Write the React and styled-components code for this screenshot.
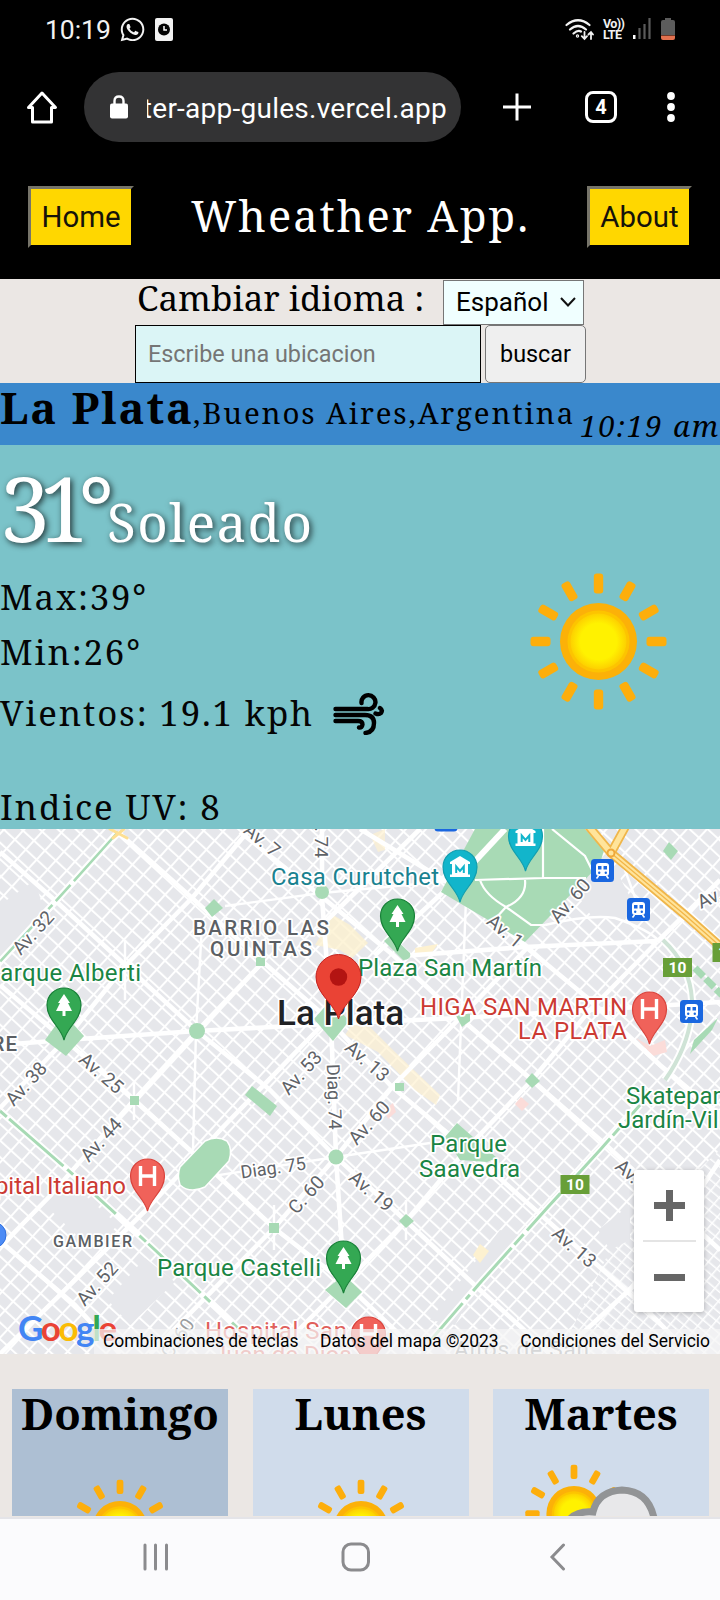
import React from "react";
import styled, { createGlobalStyle } from "styled-components";
import { FaWhatsapp } from "react-icons/fa";

const serif = `"Noto Serif", "DejaVu Serif Condensed", "DejaVu Serif", serif`;

const Global = createGlobalStyle`
  * { box-sizing: border-box; }
  body { margin: 0; background: #ebe7e4; }
  button, input, select { margin: 0; border-radius: 0; font-family: Roboto, sans-serif; }
`;

const Screen = styled.div`
  width: 720px;
  height: 1600px;
  overflow: hidden;
  display: flex;
  flex-direction: column;
  background: #ebe7e4;
  font-family: Roboto, sans-serif;
  color: #000;
`;

/* phone status bar */
const StatusBar = styled.div`
  height: 58px;
  flex: none;
  background: #000;
  color: #f2f2f2;
  display: flex;
  align-items: center;
  padding: 0 45px 0 45px;
`;
const Clock = styled.span`
  font-size: 26.6px;
  width: 74px;
  letter-spacing: -0.1px;
`;
const StatusRight = styled.div`
  margin-left: auto;
  display: flex;
  align-items: center;
`;
const VoLte = styled.div`
  width: 22px;
  margin: 0 8px 0 9px;
  font-size: 12.5px;
  line-height: 11.5px;
  font-weight: 700;
  letter-spacing: -0.6px;
  white-space: nowrap;
`;

/* browser toolbar */
const BrowserBar = styled.div`
  height: 100px;
  flex: none;
  background: #000;
  display: flex;
  align-items: flex-start;
  padding: 14px 0 0 26px;
`;
const BarIcon = styled.svg`
  flex: none;
  margin-left: ${(p) => p.$gap || 0}px;
  margin-top: ${(p) => p.$top || 0}px;
`;
const AddressPill = styled.div`
  width: 377px;
  height: 70px;
  margin-left: 24px;
  border-radius: 35px;
  background: #333334;
  display: flex;
  align-items: center;
  padding-left: 26px;
`;
const Url = styled.div`
  width: 300px;
  margin-left: 19px;
  overflow: hidden;
  display: flex;
  justify-content: flex-end;
  color: #fff;
  font-size: 28px;
  line-height: 40px;
  letter-spacing: 0.25px;
  white-space: nowrap;
  padding-top: 3px;
`;
const TabCount = styled.div`
  width: 32px;
  height: 32px;
  margin: 19px 0 0 54px;
  border: 3px solid #fff;
  border-radius: 8px;
  color: #fff;
  font-size: 20px;
  font-weight: 700;
  line-height: 26px;
  text-align: center;
`;

/* app header */
const Header = styled.header`
  height: 121px;
  flex: none;
  background: #000;
  display: flex;
  justify-content: space-between;
  padding: 28px 28px 0;
`;
const NavButton = styled.button`
  width: ${(p) => p.$w}px;
  height: 62px;
  padding: 0;
  border: 3px outset #6b6b6b;
  border-color: #767469 #3c330c #3c330c #767469;
  background: #ffd700;
  color: #15130a;
  font-size: 29.4px;
`;
const Title = styled.h1`
  margin: 0;
  font-family: ${serif};
  font-weight: 400;
  font-size: 43.4px;
  line-height: 60px;
  letter-spacing: 2px;
  color: #fff;
  white-space: nowrap;
`;

/* language and search */
const Controls = styled.section`
  height: 104px;
  flex: none;
  display: flex;
  flex-direction: column;
  padding-left: 135px;
`;
const LanguageRow = styled.div`
  display: flex;
  height: 46px;
  padding-top: 1px;
`;
const LanguageLabel = styled.label`
  width: 308px;
  padding-left: 2px;
  font-family: ${serif};
  font-size: 34.9px;
  line-height: 36px;
  white-space: nowrap;
`;
const LanguageSelect = styled.div`
  width: 141px;
  height: 45px;
  border: 1px solid #767676;
  background: #f0ffff;
  display: flex;
  align-items: center;
  gap: 12px;
  padding: 0 0 2px 12px;
  font-size: 26px;
`;
const SearchRow = styled.div`
  display: flex;
  gap: 4px;
  height: 58px;
`;
const SearchInput = styled.input`
  width: 346px;
  height: 58px;
  border: 1.4px solid #000;
  background: #dbf5f6;
  padding: 0 0 0 12px;
  font-size: 23.4px;
  &::placeholder { color: #757575; opacity: 1; }
`;
const SearchButton = styled.button`
  width: 101px;
  height: 58px;
  padding: 0;
  border: 1px solid #767676;
  border-radius: 5px;
  background: #efefef;
  color: #000;
  font-size: 23.4px;
`;

/* city strip */
const CityBar = styled.section`
  height: 62px;
  flex: none;
  background: #3a88cc;
  display: flex;
  font-family: ${serif};
  white-space: nowrap;
`;
const City = styled.strong`
  font-size: 43.5px;
  line-height: 48px;
  width: 193px;
  letter-spacing: 1.9px;
`;
const Region = styled.span`
  font-size: 29.5px;
  line-height: 59px;
  width: 388px;
  letter-spacing: 1.85px;
`;
const LocalTime = styled.em`
  font-size: 29.5px;
  line-height: 85px;
  letter-spacing: 1.8px;
`;

/* current weather */
const Current = styled.section`
  height: 384px;
  flex: none;
  background: #7bc3c9;
  display: flex;
  font-family: ${serif};
  color: #050505;
`;
const Readings = styled.div`
  width: 527px;
`;
const TempLine = styled.div`
  height: 124px;
  display: flex;
  align-items: baseline;
  color: #fff;
  text-shadow: 2px 2px 6px rgba(0, 0, 0, 0.75);
  line-height: 126px;
  white-space: nowrap;
`;
const Temperature = styled.span`
  width: 107px;
  font-size: 89px;
  letter-spacing: -10.5px;
`;
const Condition = styled.span`
  font-size: 53px;
  letter-spacing: 1.3px;
`;
const Reading = styled.div`
  height: ${(p) => p.$h}px;
  display: flex;
  align-items: center;
  gap: 18px;
  font-size: 34.8px;
  line-height: 50px;
  letter-spacing: 1.85px;
  white-space: nowrap;
`;
const BigSun = styled.svg`
  margin-top: 125px;
  width: 143px;
  height: 143px;
`;

/* map */
const MapArea = styled.section`
  position: relative;
  height: 525px;
  flex: none;
  overflow: hidden;
  background: #e8eaed;
`;
const MapDrawing = styled.svg`
  display: block;
  font-family: Roboto, sans-serif;
`;
const ZoomControl = styled.div`
  position: absolute;
  right: 16px;
  top: 341px;
  width: 70px;
  height: 142px;
  border-radius: 3px;
  background: #fff;
  box-shadow: 0 1px 5px rgba(0, 0, 0, 0.25);
  display: flex;
  flex-direction: column;
  align-items: center;
`;
const ZoomHalf = styled.div`
  height: 70px;
  display: flex;
  align-items: center;
`;
const ZoomDivider = styled.div`
  width: 53px;
  height: 2px;
  background: #e4e4e4;
`;
const Attribution = styled.div`
  position: absolute;
  right: 0;
  bottom: 0;
  width: 626px;
  height: 25px;
  background: rgba(245, 245, 245, 0.72);
  display: flex;
  justify-content: space-between;
  padding: 0 10px 0 9px;
  font-size: 17.45px;
  line-height: 25px;
  white-space: nowrap;
`;
const Logo = styled.div`
  position: absolute;
  left: 18px;
  top: 478px;
  font-family: Lato, sans-serif;
  font-size: 35px;
  line-height: 40px;
  font-weight: 700;
  letter-spacing: -2.4px;
`;
const Tint = styled.span`
  color: ${(p) => p.$c};
`;

/* forecast */
const Forecast = styled.section`
  flex: none;
  height: 163px;
  padding: 35px 12px 1px;
  display: grid;
  grid-template-columns: repeat(3, 216px);
  column-gap: 24.5px;
  overflow: hidden;
`;
const DayCard = styled.article`
  height: 127px;
  overflow: hidden;
  background: ${(p) => (p.$today ? "#adbfd3" : "#d0dceb")};
  display: flex;
  flex-direction: column;
  align-items: center;
`;
const DayName = styled.h2`
  flex: none;
  margin: 0;
  font-family: ${serif};
  font-size: 43.4px;
  font-weight: 700;
  line-height: 49px;
  height: 53px;
`;
const DayIcon = styled.svg`
  flex: none;
  width: 200px;
  height: 140px;
`;

/* system navigation */
const SystemNav = styled.nav`
  height: 84px;
  flex: none;
  background: #fbfbfd;
  border-top: 2px solid #e4e4e8;
  display: flex;
  align-items: center;
  padding: 0 0 6px 142px;
`;

const rays = Array.from({ length: 12 }, (_, i) => i * 30);

function Sun({ x, y, r }) {
  const k = r / 68;
  return (
    <g transform={`translate(${x} ${y}) scale(${k})`}>
      {rays.map((a) => (
        <rect key={a} x="-4.700" y="-68" width="9.400" height="20" rx="3" fill="#fdae0c" transform={`rotate(${a})`} />
      ))}
      <circle r="38.5" fill="#fcb108" />
      <circle r="31" fill="#fdc400" />
      <circle r="28" fill="url(#sunCore)" />
    </g>
  );
}

function Halo({ x, y, size, color, anchor = "start", weight = 400, ls, w, rot, children }) {
  return (
    <text
      x={x}
      y={y}
      fontSize={size}
      fill={color}
      textAnchor={anchor}
      fontWeight={weight}
      letterSpacing={ls}
      textLength={w}
      stroke="#fff"
      strokeWidth="3.5"
      strokeLinejoin="round"
      paintOrder="stroke"
      transform={rot ? `rotate(${rot} ${x} ${y})` : undefined}
    >
      {children}
    </text>
  );
}

const pinPath = "M0 35 C-3 22 -17 15 -17 0 A17 17 0 0 1 17 0 C17 15 3 22 0 35Z";

function Pin({ x, y, kind }) {
  const fill = { tree: "#34a853", museum: "#12b5cb", h: "#f0625a" }[kind];
  const edge = { tree: "#188038", museum: "#129eaf", h: "#d9433c" }[kind];
  return (
    <g transform={`translate(${x} ${y})`}>
      <path d={pinPath} fill={fill} stroke={edge} strokeWidth="1.2" />
      {kind === "tree" && <path d="M0-11 L6-2 H4 L8 6 H1.5 V11 H-1.5 V6 H-8 L-4-2 H-6Z" fill="#fff" />}
      {kind === "h" && <path d="M-7-10V10M7-10V10M-7 0H7" stroke="#fff" strokeWidth="3.4" />}
      {kind === "museum" && (
        <g fill="#fff">
          <path d="M0-11 L10-5 V-3 H-10 V-5Z" />
          <path d="M-8-3 H8 V8 H-8Z M-10 7.500H10V10H-10Z" />
          <path d="M-3.800 6V-0.500L0 4L3.800-0.500V6" fill="none" stroke="#12b5cb" strokeWidth="2" />
        </g>
      )}
    </g>
  );
}

function Station({ x, y }) {
  return (
    <g transform={`translate(${x} ${y})`}>
      <rect x="-11.500" y="-11.500" width="23" height="23" rx="3.500" fill="#1a67e0" />
      <rect x="-6.500" y="-7.500" width="13" height="13" rx="3" fill="#fff" />
      <path d="M-4.500-4.500H-1V-1H-4.500Z M1-4.500H4.500V-1H1Z" fill="#1a67e0" />
      <circle cx="-3.300" cy="2.200" r="1.200" fill="#1a67e0" />
      <circle cx="3.300" cy="2.200" r="1.200" fill="#1a67e0" />
      <path d="M-4 5.500L-6 8M4 5.500L6 8" stroke="#fff" strokeWidth="1.600" />
    </g>
  );
}

function RouteBadge({ x, y }) {
  return (
    <g>
      <rect x={x - 14.5} y={y - 9.5} width="29" height="19" fill="#689f38" />
      <text x={x} y={y + 5.5} fontSize="15.500" fontWeight="700" fill="#fff" textAnchor="middle">10</text>
    </g>
  );
}

const avenues = [
  "M0 852L58 903L197 1031L270 1090L336 1157L405 1220L480 1290L522 1328L550 1354",
  "M118 832L192 898L263 962L327 1018L392 1087L468 1150L540 1214L640 1303L690 1354",
  "M240 832L322 897L393 955L460 1018L532 1080L606 1145L720 1250",
  "M360 829L465 893L527 948L590 1000L660 1065L720 1115",
  "M0 985L65 1040L134 1100L192 1152L274 1228L345 1283L420 1354",
  "M0 1241L75 1305L120 1354",
  "M250 829L192 898L125 966L65 1040L0 1108",
  "M420 829L322 925M327 1020L225 1125L147 1209L0 1354",
  "M263 962L197 1031L134 1100L50 1196L0 1247",
  "M527 948L460 1018L392 1087L336 1157L274 1228L150 1354",
  "M657 942L590 1010L532 1080L470 1145L406 1221L345 1283L275 1354",
  "M505 829L440 895L375 955M720 880L657 942",
  "M720 1160L640 1280L560 1354",
  "M0 1045L65 1040L197 1031L327 1024L460 1018L720 1002",
  "M402 956L525 947L657 941",
  "M322 829V897L331 1020L336 1157L343 1265",
];
const lanes = [
  "M225 906L322 893L460 880",
  "M202 925L196 1031L193 1150",
  "M466 900L458 1100",
  "M200 1178L336 1157L430 1143",
  "M545 925Q590 914 615 918Q650 930 660 942M622 862L636 900",
  "M125 940V1000M134 1080V1120M274 1205V1250M406 1200V1240",
];

function MapView() {
  return (
    <MapDrawing width="720" height="525" viewBox="0 829 720 525">
      <defs>
        <pattern id="blocks" width="12.2" height="14.8" patternUnits="userSpaceOnUse" patternTransform="rotate(-47.500)">
          <rect width="12.2" height="14.8" fill="#e6e7eb" />
          <path d="M0 0H12.2M0 0V14.8" stroke="#fff" strokeWidth="4" />
        </pattern>
        <pattern id="smallBlocks" width="8" height="11" patternUnits="userSpaceOnUse" patternTransform="rotate(-50)">
          <rect width="8" height="11" fill="#e6e7eb" />
          <path d="M0 0H8M0 0V11" stroke="#fff" strokeWidth="3" />
        </pattern>
      </defs>
      <rect y="829" width="720" height="525" fill="url(#blocks)" />
      <path d="M610 1250L720 1150V1354H560Z" fill="url(#smallBlocks)" />
      <g fill="#e6e7eb">
        <path d="M575 890L612 862L634 905L625 920L590 914Z" />
        <path d="M40 1200L68 1180L118 1225L92 1250Z" />
        <path d="M108 1300L145 1258L175 1282L130 1325Z" />
        <path d="M0 905L35 880L45 915L0 960Z" />
        <path d="M520 1235L475 1290L455 1325L430 1320L500 1230Z" />
        <path d="M598 1230L630 1205V1240L610 1250Z" />
      </g>
      <g fill="#fdf1d0">
        <path d="M333 915L350 925L368 943L352 958L340 950L315 945Z" opacity=".8" />
        <path d="M358 1015L395 1052L440 1095L436 1105L415 1090L378 1052L345 1035Z" opacity=".7" />
        <path d="M370 835L385 829L385 850L378 852Z" opacity=".7" />
        <path d="M473 1255L480 1244L489 1251L480 1263Z" />
        <path d="M415 948L438 944L430 955L415 955Z" />
      </g>
      <g fill="#fbdcd9">
        <path d="M636 1038L650 1046L665 1040L667 1052L653 1056Z" />
        <path d="M515 1104L521 1097L529 1104L522 1111Z" />
        <path d="M384 1110L393 1103L396 1112L388 1119Z" />
      </g>
      <g fill="none" stroke="#fff" strokeLinejoin="round">
        {avenues.map((d) => <path key={d} d={d} strokeWidth="4.600" />)}
        {lanes.map((d) => <path key={d} d={d} strokeWidth="2.400" />)}
      </g>
      <g fill="none">
        <path d="M118 832L55 902L-4 966" stroke="#fff" strokeWidth="7" />
        <path d="M118 832L55 902L-4 966" stroke="#a8dab5" strokeWidth="2.600" strokeDasharray="66 5 22 5 6 5" />
        <path d="M0 1111L68 1170L155 1250L240 1330" stroke="#fff" strokeWidth="7" />
        <path d="M0 1111L68 1170L155 1250L240 1330" stroke="#a8dab5" strokeWidth="3" strokeDasharray="9 3 72 5 8 30 28 32" />
        <path d="M430 1341L480 1283L548 1207L600 1150L640 1105" stroke="#fff" strokeWidth="7" />
        <path d="M430 1341L480 1283L548 1207L600 1150L640 1105" stroke="#a8dab5" strokeWidth="3" strokeDasharray="50 5 6 5 58 4 14 5" />
        <path d="M663 940Q690 965 692 1000Q693 1040 665 1080" stroke="#fff" strokeWidth="8" />
        <path d="M663 940Q690 965 692 1000Q693 1040 665 1080" stroke="#cfe3d6" strokeWidth="4" />
        <path d="M695 968L722 995" stroke="#a8dab5" strokeWidth="7" strokeDasharray="12 3" />
      </g>
      <g fill="#a8dab5">
        <path d="M690 1054L694 1040L718 1018L712 1030Z" />
        <path d="M475 829L441 892L525 942L600 864L604 850L585 829Z" />
        <path d="M64 1014L84 1036L66 1056L45 1040Z" />
        <circle cx="197" cy="1031" r="8" />
        <circle cx="322" cy="892" r="7" />
        <circle cx="336" cy="1157" r="7.500" />
        <path d="M214 899L223 908L212 917L205 908Z" />
        <path d="M256 957H265V966H256Z" />
        <path d="M130 1096H139V1105H130Z" />
        <path d="M269 1223H279V1233H269Z" />
        <path d="M395 1083H404V1091H395Z" />
        <path d="M406 1214L414 1221L406 1228L399 1221Z" />
        <path d="M532 1073L540 1081L532 1088L525 1081Z" />
        <path d="M314 1019L331 1000L349 1021L333 1041Z" />
        <path d="M384 941L391 935L410 953Q412 960 403 960Z" />
        <path d="M252 1086L277 1106L270 1116L245 1095Z" />
        <path d="M205 1141Q217 1135 227 1141Q233 1149 229 1161L205 1187Q190 1194 180 1185Q177 1175 180 1167Z" stroke="#fff" strokeWidth="1.500" />
        <path d="M457 1123L497 1158L487 1162L460 1160L445 1137Z" />
        <path d="M344 1275L362 1292L346 1308L325 1290Z" />
        <path d="M455 1014H470V1021L462 1027Z" />
        <path d="M669 842L678 851L671 860L663 851Z" />
      </g>
      <g fill="none" stroke="#fff" strokeWidth="2.200">
        <path d="M505 829L452 886" strokeWidth="6" />
        <path d="M543 829V878M475 880L543 878H586M480 880Q485 895 506 907L531 925H545M525 880Q527 898 506 907L496 918M552 829L585 856L592 870" />
      </g>
      <g fill="none" strokeLinecap="round">
        <path d="M585 822L611 853L685 915L730 955M628 822L611 853" stroke="#f0b64a" strokeWidth="9" />
        <path d="M585 822L611 853L685 915L730 955M628 822L611 853" stroke="#ffe49b" strokeWidth="5.500" />
        <path d="M611 853L685 915L730 955" stroke="#f2b548" strokeWidth="1.200" />
        <circle cx="611" cy="853" r="3.500" stroke="#f0a83a" strokeWidth="2" fill="#ffe49b" />
        <path d="M110 829L127 838M124 829L113 838" stroke="#fddf93" strokeWidth="3" />
      </g>

      <g>
        <Halo x={38} y={937} size={19} color="#5f6368" anchor="middle" rot={-48}>Av. 32</Halo>
        <Halo x={258} y={845} size={19} color="#5f6368" anchor="middle" rot={40}>Av. 7</Halo>
        <Halo x={315} y={837} size={19} color="#5f6368" anchor="middle" rot={90}>g. 74</Halo>
        <Halo x={575} y={905} size={19} color="#5f6368" anchor="middle" rot={-49}>Av. 60</Halo>
        <Halo x={501} y={936} size={19} color="#5f6368" anchor="middle" rot={40}>Av. 1</Halo>
        <Halo x={701} y={909} size={19} color="#5f6368" rot={-25}>Av. 66</Halo>
        <Halo x={31} y={1088} size={19} color="#5f6368" anchor="middle" rot={-48}>Av. 38</Halo>
        <Halo x={97} y={1078} size={19} color="#5f6368" anchor="middle" rot={41}>Av. 25</Halo>
        <Halo x={306} y={1077} size={19} color="#5f6368" anchor="middle" rot={-48}>Av. 53</Halo>
        <Halo x={363} y={1066} size={19} color="#5f6368" anchor="middle" rot={41}>Av. 13</Halo>
        <Halo x={328} y={1097} size={18} color="#5f6368" anchor="middle" rot={88}>Diag. 74</Halo>
        <Halo x={374} y={1127} size={19} color="#5f6368" anchor="middle" rot={-48}>Av. 60</Halo>
        <Halo x={106} y={1144} size={19} color="#5f6368" anchor="middle" rot={-48}>Av. 44</Halo>
        <Halo x={274} y={1174} size={18} color="#5f6368" anchor="middle" rot={-8}>Diag. 75</Halo>
        <Halo x={311} y={1199} size={19} color="#5f6368" anchor="middle" rot={-48}>C. 60</Halo>
        <Halo x={367} y={1196} size={19} color="#5f6368" anchor="middle" rot={41}>Av. 19</Halo>
        <Halo x={102} y={1288} size={19} color="#5f6368" anchor="middle" rot={-48}>Av. 52</Halo>
        <Halo x={570} y={1252} size={19} color="#5f6368" anchor="middle" rot={41}>Av. 13</Halo>
        <Halo x={614} y={1168} size={19} color="#5f6368" rot={41}>Av. 7</Halo>
        <Halo x={183} y={1342} size={19} color="#9a9da0" anchor="middle" rot={-55}>C. 60</Halo>
      </g>

      <Halo x={271} y={885} size={23.8} w={168} color="#1a8290">Casa Curutchet</Halo>
      <Halo x={193} y={935} size={20.5} w={136} color="#5b5f64" weight={500}>BARRIO LAS</Halo>
      <Halo x={210} y={956} size={20.5} w={102} color="#5b5f64" weight={500}>QUINTAS</Halo>
      <Halo x={141} y={981} size={24} w={156} color="#1a8544" anchor="end">Parque Alberti</Halo>
      <Halo x={358} y={976} size={24} w={184} color="#1a8544">Plaza San Martín</Halo>
      <Halo x={277} y={1025} size={35} w={127} color="#202124" weight={500}>La Plata</Halo>
      <Halo x={420} y={1015} size={24} w={207} color="#cc3a33">HIGA SAN MARTIN</Halo>
      <Halo x={518} y={1039} size={24} w={109} color="#cc3a33">LA PLATA</Halo>
      <Halo x={18} y={1051} size={20.5} color="#5b5f64" weight={500} ls="1" anchor="end">TORRE</Halo>
      <Halo x={430} y={1152} size={24} w={77} color="#1a8544">Parque</Halo>
      <Halo x={419} y={1177} size={24} w={101} color="#1a8544">Saavedra</Halo>
      <Halo x={626} y={1104} size={24} color="#1a8544">Skatepark</Halo>
      <Halo x={618} y={1128} size={24} color="#1a8544">Jardín-Villa</Halo>
      <Halo x={126} y={1194} size={24} color="#cc3a33" anchor="end">Hospital Italiano</Halo>
      <Halo x={53} y={1247} size={16} w={79} color="#5b5f64" weight={500}>GAMBIER</Halo>
      <Halo x={157} y={1276} size={24} w={164} color="#1a8544">Parque Castelli</Halo>
      <Halo x={205} y={1339} size={24} w={142} color="#e0605b">Hospital San</Halo>
      <Halo x={213} y={1363} size={24} color="#e0605b">Juan de Dios</Halo>
      <Halo x={454} y={1357} size={22.5} w={135} color="#85888c">Altos de San</Halo>

      <Pin x={64} y={1005} kind="tree" />
      <Pin x={397.5} y={916} kind="tree" />
      <Pin x={343.5} y={1258} kind="tree" />
      <Pin x={460} y={867} kind="museum" />
      <Pin x={525.5} y={836} kind="museum" />
      <Pin x={649.5} y={1009} kind="h" />
      <Pin x={147.5} y={1176} kind="h" />
      <Pin x={368.5} y={1334} kind="h" />
      <Station x={602.5} y={870.5} />
      <Station x={638.5} y={909.5} />
      <Station x={691.5} y={1011.5} />
      <Station x={446} y={820} />
      <RouteBadge x={677.5} y={967.5} />
      <RouteBadge x={575} y={1184.5} />
      <RouteBadge x={727} y={952.5} />
      <circle cx="-7" cy="1235" r="13" fill="#4c8bf5" stroke="#2f6fde" />
      <path d="M338.500 1019C335 1004 316 994 316 977A22.500 22.500 0 0 1 361 977C361 994 342 1004 338.500 1019Z" fill="#ea4335" stroke="#c5221f" strokeWidth="1" />
      <circle cx="338.500" cy="977" r="8.700" fill="#b31412" />
    </MapDrawing>
  );
}

export default function App() {
  return (
    <Screen>
      <Global />
      <StatusBar>
        <Clock>10:19</Clock>
        <FaWhatsapp size={27} />
        <BarIcon $gap={9} width="18" height="23" viewBox="0 0 18 23">
          <rect width="18" height="23" rx="2" fill="#f2f2f2" />
          <circle cx="9" cy="11.500" r="6" fill="#000" />
          <path d="M9 8V12H12" stroke="#fff" strokeWidth="1.500" fill="none" />
        </BarIcon>
        <StatusRight>
          <BarIcon width="29" height="23" viewBox="0 0 29 23" fill="none" stroke="#f2f2f2" strokeWidth="2.200" strokeLinecap="round">
            <path d="M1.500 7Q13 -2.500 24.500 7M5 11.500Q13 4.500 21 11.500M8.500 15.500Q13 11.500 16 13.500" />
            <circle cx="12.500" cy="18" r=".6" />
            <path d="M19.500 14V20.500M16.800 18.200L19.500 21L22 18.200M26 21V14M23.500 16.500L26 14L28 16.500" strokeWidth="1.800" />
          </BarIcon>
          <VoLte>Vo))<br />LTE</VoLte>
          <BarIcon width="18" height="22" viewBox="0 0 18 22">
            <rect y="17" width="2.500" height="4" fill="#fff" />
            <path d="M6.500 10V21M11.500 6V21M16.500 0V21" stroke="#5a5a5a" strokeWidth="2.200" />
          </BarIcon>
          <BarIcon $gap={10} width="14" height="22" viewBox="0 0 14 22">
            <path d="M4 0H10V2H12Q14 2 14 4V17H0V4Q0 2 2 2H4Z" fill="#5c5c5c" />
            <path d="M0 17.500H14V20Q14 22 12 22H2Q0 22 0 20Z" fill="#e2714f" />
          </BarIcon>
        </StatusRight>
      </StatusBar>

      <BrowserBar>
        <BarIcon $top={18} width="34" height="34" viewBox="0 0 34 34" fill="none" stroke="#fff" strokeWidth="3" strokeLinejoin="round">
          <path d="M2.500 17.500L16 3L29.500 17.500H25.500V32H6.500V17.500Z" />
        </BarIcon>
        <AddressPill>
          <BarIcon width="18" height="24" viewBox="0 0 18 24">
            <rect y="8.500" width="18" height="15" rx="2" fill="#fff" />
            <path d="M4.500 9V6Q4.500 1.500 9 1.500Q13.500 1.500 13.500 6V9" fill="none" stroke="#fff" strokeWidth="2.400" />
          </BarIcon>
          <Url>wheater-app-gules.vercel.app</Url>
        </AddressPill>
        <BarIcon $gap={42} $top={20} width="28" height="30" viewBox="0 0 28 30" stroke="#fff" strokeWidth="3">
          <path d="M14 1.500V28.500M0 15H28" />
        </BarIcon>
        <TabCount>4</TabCount>
        <BarIcon $gap={49} $top={20} width="10" height="30" viewBox="0 0 10 30" fill="#fff">
          <circle cx="5" cy="4" r="3.900" />
          <circle cx="5" cy="15" r="3.900" />
          <circle cx="5" cy="26" r="3.900" />
        </BarIcon>
      </BrowserBar>

      <Header>
        <NavButton $w={106}>Home</NavButton>
        <Title>Wheather App.</Title>
        <NavButton $w={105}>About</NavButton>
      </Header>

      <Controls>
        <LanguageRow>
          <LanguageLabel>Cambiar idioma :</LanguageLabel>
          <LanguageSelect>
            Español
            <svg width="16" height="10" viewBox="0 0 16 10" fill="none" stroke="#111" strokeWidth="2">
              <path d="M1 1L8 8.500L15 1" />
            </svg>
          </LanguageSelect>
        </LanguageRow>
        <SearchRow>
          <SearchInput placeholder="Escribe una ubicacion" />
          <SearchButton>buscar</SearchButton>
        </SearchRow>
      </Controls>

      <CityBar>
        <City>La Plata</City>
        <Region>,Buenos Aires,Argentina</Region>
        <LocalTime>10:19 am</LocalTime>
      </CityBar>

      <Current>
        <Readings>
          <TempLine>
            <Temperature>31°</Temperature>
            <Condition>Soleado</Condition>
          </TempLine>
          <Reading $h={55}>Max:39°</Reading>
          <Reading $h={55}>Min:26°</Reading>
          <Reading $h={67}>
            Vientos: 19.1 kph
            <svg width="54" height="44" viewBox="331 690 54 44" fill="none" stroke="#000" strokeWidth="4.400" strokeLinecap="round">
              <path d="M334.500 708H366A7 7 0 1 0 360.500 702M334.500 714H364Q373 714 373 722Q373 731 364.500 732M334.500 720H357Q361.500 720 361.500 723.500Q361 727 358 726.500M379 707Q382 709 380 712Q378 714 374.500 712.500" />
            </svg>
          </Reading>
          <Reading $h={121}>Indice UV: 8</Reading>
        </Readings>
        <BigSun viewBox="-71.500 -71.500 143 143">
          <defs>
            <radialGradient id="sunCore">
              <stop offset="0.650" stopColor="#fff200" />
              <stop offset="1" stopColor="#fdd000" />
            </radialGradient>
          </defs>
          <Sun x={0} y={0} r={68} />
        </BigSun>
      </Current>

      <MapArea>
        <MapView />
        <Logo>
          <Tint $c="#4285f4">G</Tint>
          <Tint $c="#ea4335">o</Tint>
          <Tint $c="#fbbc04">o</Tint>
          <Tint $c="#4285f4">g</Tint>
          <Tint $c="#34a853">l</Tint>
          <Tint $c="#ea4335">e</Tint>
        </Logo>
        <ZoomControl>
          <ZoomHalf>
            <svg width="31" height="31" viewBox="0 0 31 31" stroke="#666" strokeWidth="7"><path d="M15.500 0V31M0 15.500H31" /></svg>
          </ZoomHalf>
          <ZoomDivider />
          <ZoomHalf>
            <svg width="31" height="7" viewBox="0 0 31 7" stroke="#666" strokeWidth="7"><path d="M0 3.500H31" /></svg>
          </ZoomHalf>
        </ZoomControl>
        <Attribution>
          <span>Combinaciones de teclas</span>
          <span>Datos del mapa ©2023</span>
          <span>Condiciones del Servicio</span>
        </Attribution>
      </MapArea>

      <Forecast>
        <DayCard $today>
          <DayName>Domingo</DayName>
          <DayIcon viewBox="0 0 200 140"><Sun x={100} y={86.500} r={48.700} /></DayIcon>
        </DayCard>
        <DayCard>
          <DayName>Lunes</DayName>
          <DayIcon viewBox="0 0 200 140"><Sun x={100} y={86.500} r={48.700} /></DayIcon>
        </DayCard>
        <DayCard>
          <DayName>Martes</DayName>
          <DayIcon viewBox="0 0 200 140">
            <Sun x={73} y={71.500} r={48.700} />
            <path d="M62 88Q70 68 92 70Q97 49 121 48Q150 49 154 82V120H60Z" fill="#e8e8ea" stroke="#929496" strokeWidth="7" />
          </DayIcon>
        </DayCard>
      </Forecast>

      <SystemNav>
        <BarIcon width="28" height="28" viewBox="0 0 28 28" stroke="#8b8b8e" strokeWidth="3" strokeLinecap="round">
          <path d="M3 2V26M13.500 2V26M24.500 2V26" />
        </BarIcon>
        <BarIcon $gap={171} width="30" height="30" viewBox="0 0 30 30" fill="none" stroke="#8b8b8e" strokeWidth="3">
          <rect x="2" y="2" width="25.500" height="26" rx="8" />
        </BarIcon>
        <BarIcon $gap={178} width="18" height="28" viewBox="0 0 18 28" fill="none" stroke="#8b8b8e" strokeWidth="3" strokeLinecap="round">
          <path d="M14.500 2L3 14L14.500 26" />
        </BarIcon>
      </SystemNav>
    </Screen>
  );
}
